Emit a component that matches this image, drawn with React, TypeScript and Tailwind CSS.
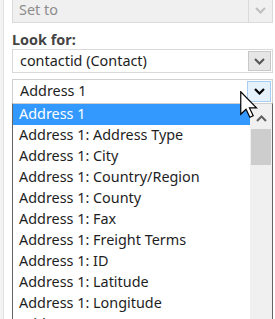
import React from 'react';

const items = [
  'Address 1',
  'Address 1: Address Type',
  'Address 1: City',
  'Address 1: Country/Region',
  'Address 1: County',
  'Address 1: Fax',
  'Address 1: Freight Terms',
  'Address 1: ID',
  'Address 1: Latitude',
  'Address 1: Longitude',
  'Address 1: Name',
];

const Chevron: React.FC<{ color: string; up?: boolean; width?: number }> = ({ color, up, width = 2 }) => (
  <svg width="11" height="7" viewBox="0 0 11 7">
    <path
      d={up ? 'M1 6 L5.5 1.5 L10 6' : 'M1 1 L5.5 5.5 L10 1'}
      fill="none"
      stroke={color}
      strokeWidth={width}
    />
  </svg>
);

const Cursor: React.FC = () => (
  <svg width="18" height="27" viewBox="0 0 12 18" className="absolute left-[240px] top-[91px]">
    <path
      d="M0.5 0.5 L0.5 15.5 L4 12.2 L6.6 17.5 L8.8 16.5 L6.3 11.3 L11 11.3 Z"
      fill="#ffffff"
      stroke="#000000"
      strokeWidth="0.8"
      strokeLinejoin="miter"
    />
  </svg>
);

export default function App() {
  return (
    <div className="relative w-[275px] h-[319px] overflow-hidden bg-white flex font-['Segoe_UI','Noto_Sans',sans-serif] text-[14.4px] text-[#1e1e1e]">
      <div className="w-[4px] h-full bg-[#f3f3f3] border-r border-[#e0e0e0] shrink-0" />
      <div className="flex-1 pl-[8px] pr-[2px] flex flex-col min-h-0">
        {/* Set to (disabled) */}
        <div className="shrink-0 mt-[-2px] h-[25px] flex border border-[#dadada] bg-[#f0f0f0]">
          <div className="flex-1 pl-[6px] flex items-center text-[#8c8c8c] leading-none">Set to</div>
          <div className="w-[24px] flex items-center justify-center border-l border-[#dadada]">
            <Chevron color="#bfbfbf" />
          </div>
        </div>

        <div className="shrink-0 mt-[8px] h-[18px] flex items-center font-bold text-[#444444] leading-none">Look for:</div>

        {/* Look for field */}
        <div className="shrink-0 h-[24px] flex border border-[#d9d9d9] bg-white">
          <div className="flex-1 pl-[7px] flex items-center leading-none">contactid (Contact)</div>
          <div className="w-[23px] my-[1px] mr-[1px] flex items-center justify-center bg-[#e6e6e6] border border-[#c8c8c8]">
            <Chevron color="#555555" />
          </div>
        </div>

        {/* Attribute select (open) */}
        <div className="shrink-0 mt-[6px] h-[24px] flex border border-[#cfcfcf] border-b-0 bg-white">
          <div className="flex-1 pl-[7px] flex items-center leading-none">Address 1</div>
          <div className="w-[24px] my-[1px] mr-[1px] flex items-center justify-center bg-[#e5f1fb] border border-[#a9cdf0]">
            <Chevron color="#000000" width={2.2} />
          </div>
        </div>

        {/* Dropdown list */}
        <div className="flex-1 min-h-0 overflow-hidden flex border-l border-r border-[#646464] border-t border-t-[#cfcfcf] bg-white">
          <div className="flex-1">
            {items.map((item, i) => (
              <div
                key={item}
                className={
                  i === 0
                    ? 'h-[21px] pl-[6px] flex items-center whitespace-nowrap leading-none bg-[#3399ff] text-white'
                    : 'h-[21px] pl-[6px] flex items-center whitespace-nowrap leading-none'
                }
              >
                {item}
              </div>
            ))}
          </div>
          <div className="w-[22px] bg-[#f0f0f0] flex flex-col items-center">
            <div className="h-[25px] w-full flex items-center justify-center pt-[4px]">
              <Chevron color="#606060" up />
            </div>
            <div className="w-[20px] h-[36px] bg-[#cdcdcd]" />
          </div>
        </div>
      </div>
      <Cursor />
    </div>
  );
}
